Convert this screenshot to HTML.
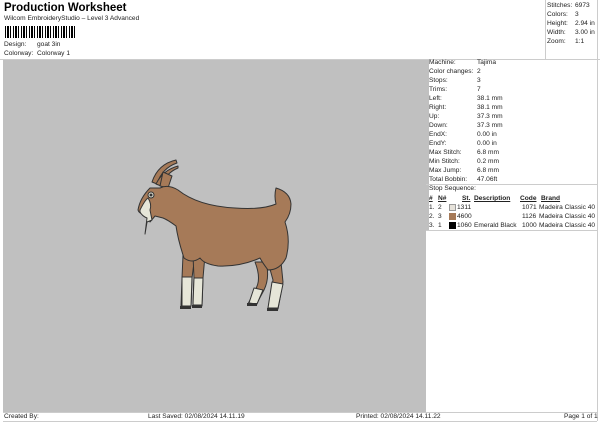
<!DOCTYPE html>
<html><head><style>
body{margin:0;width:600px;height:424px;background:#fff;font-family:"Liberation Sans",sans-serif;position:relative;overflow:hidden;color:#222}
.a{position:absolute;font-size:6.6px;white-space:nowrap}
.bc{position:absolute;left:5px;top:26px;width:71px;height:12px;background:repeating-linear-gradient(90deg,#000 0 1px,#fff 1px 2px,#000 2px 4px,#fff 4px 5px,#000 5px 6px,#fff 6px 8px)}
table{border-collapse:collapse;font-size:6.6px}
td{padding:0 2px 0 0;height:9px;line-height:9px;white-space:nowrap}
</style></head><body>
<div class="a" style="left:4px;top:2px;font-size:11.5px;font-weight:bold;color:#000">Production Worksheet</div>
<div class="a" style="left:4px;top:15px">Wilcom EmbroideryStudio – Level 3 Advanced</div>
<div class="bc"></div>
<div class="a" style="left:4px;top:41px">Design:</div><div class="a" style="left:37px;top:41px">goat 3in</div>
<div class="a" style="left:4px;top:50px">Colorway:</div><div class="a" style="left:37px;top:50px">Colorway 1</div>
<div style="position:absolute;left:0;top:59px;width:600px;height:1px;background:#ccc"></div>
<div style="position:absolute;left:545px;top:0;width:1px;height:59px;background:#ccc"></div>
<div style="position:absolute;left:597px;top:0;width:1px;height:421px;background:#ccc"></div>
<div style="position:absolute;left:3px;top:60px;width:423px;height:352px;background:#c0c0c0"></div>
<div style="position:absolute;left:426px;top:60px;width:3px;height:170px;background:#c0c0c0"></div>
<table style="position:absolute;left:547px;top:1px"><tr><td style="width:26px">Stitches:</td><td>6973</td></tr><tr><td>Colors:</td><td>3</td></tr><tr><td>Height:</td><td>2.94 in</td></tr><tr><td>Width:</td><td>3.00 in</td></tr><tr><td>Zoom:</td><td>1:1</td></tr></table>
<table style="position:absolute;left:429px;top:58px"><tr><td style="width:46px">Machine:</td><td>Tajima</td></tr><tr><td>Color changes:</td><td>2</td></tr><tr><td>Stops:</td><td>3</td></tr><tr><td>Trims:</td><td>7</td></tr><tr><td>Left:</td><td>38.1 mm</td></tr><tr><td>Right:</td><td>38.1 mm</td></tr><tr><td>Up:</td><td>37.3 mm</td></tr><tr><td>Down:</td><td>37.3 mm</td></tr><tr><td>EndX:</td><td>0.00 in</td></tr><tr><td>EndY:</td><td>0.00 in</td></tr><tr><td>Max Stitch:</td><td>6.8 mm</td></tr><tr><td>Min Stitch:</td><td>0.2 mm</td></tr><tr><td>Max Jump:</td><td>6.8 mm</td></tr><tr><td>Total Bobbin:</td><td>47.06ft</td></tr></table>
<div style="position:absolute;left:426px;top:184px;width:171px;height:1px;background:#ccc"></div>
<div class="a" style="left:429px;top:185px">Stop Sequence:</div>
<div class="a" style="left:429px;top:195px;font-weight:bold;text-decoration:underline">#</div>
<div class="a" style="left:438px;top:195px;font-weight:bold;text-decoration:underline">N#</div>
<div class="a" style="left:462px;top:195px;font-weight:bold;text-decoration:underline">St.</div>
<div class="a" style="left:474px;top:195px;font-weight:bold;text-decoration:underline">Description</div>
<div class="a" style="left:520px;top:195px;font-weight:bold;text-decoration:underline">Code</div>
<div class="a" style="left:541px;top:195px;font-weight:bold;text-decoration:underline">Brand</div>
<div class="a" style="left:429px;top:204px">1.</div><div class="a" style="left:438px;top:204px">2</div><div style="position:absolute;left:449px;top:204px;width:5px;height:5px;background:#e6e2da;border:1px solid #999"></div><div class="a" style="left:457px;top:204px">1311</div><div class="a" style="left:522px;top:204px">1071</div><div class="a" style="left:539px;top:204px">Madeira Classic 40</div>
<div class="a" style="left:429px;top:213px">2.</div><div class="a" style="left:438px;top:213px">3</div><div style="position:absolute;left:449px;top:213px;width:7px;height:7px;background:#a67a58"></div><div class="a" style="left:457px;top:213px">4600</div><div class="a" style="left:522px;top:213px">1126</div><div class="a" style="left:539px;top:213px">Madeira Classic 40</div>
<div class="a" style="left:429px;top:222px">3.</div><div class="a" style="left:438px;top:222px">1</div><div style="position:absolute;left:449px;top:222px;width:7px;height:7px;background:#000"></div><div class="a" style="left:457px;top:222px">1060</div><div class="a" style="left:474px;top:222px">Emerald Black</div><div class="a" style="left:522px;top:222px">1000</div><div class="a" style="left:539px;top:222px">Madeira Classic 40</div>
<div style="position:absolute;left:426px;top:230px;width:171px;height:1px;background:#ccc"></div>
<div style="position:absolute;left:3px;top:412px;width:594px;height:1px;background:#ccc"></div>
<div style="position:absolute;left:3px;top:421px;width:594px;height:1px;background:#ccc"></div>
<div class="a" style="left:4px;top:413px">Created By:</div>
<div class="a" style="left:148px;top:413px">Last Saved: 02/08/2024 14.11.19</div>
<div class="a" style="left:356px;top:413px">Printed: 02/08/2024 14.11.22</div>
<div class="a" style="left:564px;top:413px">Page 1 of 1</div>
<svg style="position:absolute;left:0;top:0" width="600" height="424" viewBox="0 0 600 424">
<g stroke="#333" stroke-width="1" stroke-linejoin="round">
<path d="M152 182 Q158 164 176 160 L177 163 Q162 168 157 184Z" fill="#a67a58"/>
<path d="M156 184 Q163 170 178 166 L178 168 Q166 173 161 186Z" fill="#a67a58"/>
<path d="M160 186 L163 172 L172 176 L168 188Z" fill="#a67a58"/>
<path d="M183 255 L182 278 L181 306 L191 306 L192 278 L195 255Z" fill="#a67a58"/>
<path d="M193 255 L194 278 L193 306 L202 306 L203 278 L205 255Z" fill="#a67a58"/>
<path d="M255 262 Q262 280 255 290 L248 304 L256 305 L264 290 Q270 278 266 262Z" fill="#a67a58"/>
<path d="M268 262 L273 280 L268 309 L278 309 L283 282 L281 262Z" fill="#a67a58"/>
<path d="M160 188 Q168 184 178 190 Q198 206 235 208 Q262 210 276 204 Q274 196 276 188 Q290 192 291 204 Q291 214 285 222 Q291 240 286 258 Q280 270 268 270 Q262 262 260 258 Q240 267 218 266 Q204 264 200 258 Q192 264 184 258 Q178 240 176 226 Q168 220 163 218 L155 216 L150 222 L145 214 Q139 214 138 210 Q140 198 150 188Z" fill="#a67a58"/>
<path d="M140 210 Q145 200 148 198 Q152 204 150 210 L152 220 L147 222 L145 234 L147 218 Q142 216 140 212Z" fill="#e6e6d8"/>
<circle cx="151" cy="195" r="3" fill="#e6e6d8"/><circle cx="151" cy="195" r="1" fill="#333"/>
<path d="M182 277 L192 277 L191 306 L182 306Z" fill="#e6e6d8"/>
<path d="M194 278 L203 278 L202 305 L193 305Z" fill="#e6e6d8"/>
<path d="M254 288 L263 290 L257 304 L249 303Z" fill="#e6e6d8"/>
<path d="M272 282 L283 284 L278 308 L268 308Z" fill="#e6e6d8"/>
</g>
<g fill="#333"><rect x="180" y="306" width="11" height="3"/><rect x="192" y="305" width="10" height="3"/><rect x="247" y="303" width="10" height="3"/><rect x="267" y="308" width="11" height="3"/></g>
</svg>
</body></html>
